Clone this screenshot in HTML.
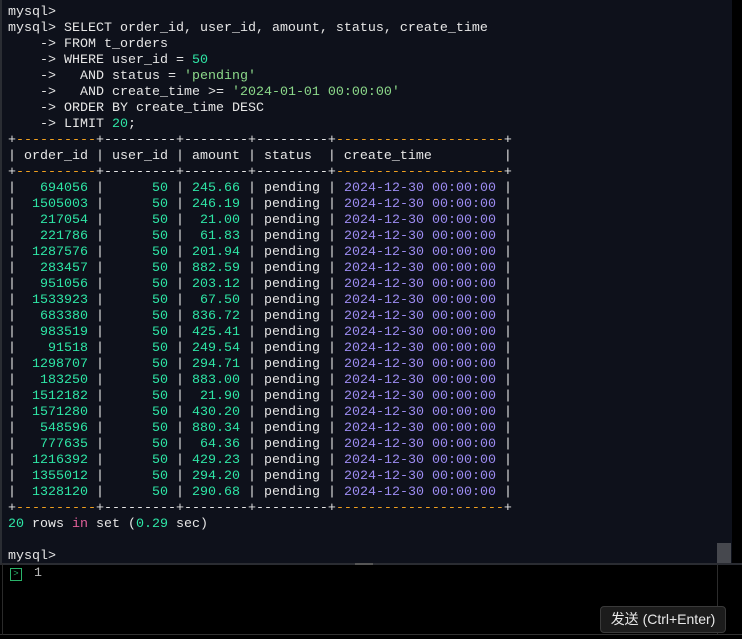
<!DOCTYPE html>
<html><head><meta charset="utf-8"><style>
body{margin:0;width:742px;height:639px;background:#000;overflow:hidden;position:relative;font-family:"Liberation Mono",monospace;}
#term{position:absolute;left:0;top:0;width:732px;height:563px;background:#0e111b;border-left:2px solid #2a2d33;box-sizing:border-box}
pre{margin:0;position:absolute;left:6px;top:5px;font-family:"Liberation Mono",monospace;font-size:13.33px;line-height:16px;color:#e6e6e6;}
.n{color:#2ee6a6}.s{color:#8cd98a}.p{color:#9d8cf2}.o{color:#f0a020}.k{color:#e2609a}
#thumb{position:absolute;left:717px;top:543px;width:14px;height:20px;background:#46484e}
#bot{position:absolute;left:0;top:563px;width:742px;height:76px;background:#000;border-top:2px solid #2a2c32;box-sizing:border-box}
#vl{position:absolute;left:717px;top:565px;width:1px;height:70px;background:#2c2c2c}
#bl{position:absolute;left:0;top:634px;width:742px;height:1px;background:#333}
#ll{position:absolute;left:2px;top:563px;width:1px;height:72px;background:#2a2a2a}
#prm{position:absolute;left:10px;top:568px;width:10px;height:11px;border:1px solid #2ab36a;color:#2ab36a;font-size:9px;line-height:11px;text-align:center}
#one{position:absolute;left:34px;top:566px;color:#bbb;font-size:13.33px}
#btn{position:absolute;left:600px;top:606px;width:124px;height:25px;background:#1c1c1c;border:1px solid #3a3a3a;border-radius:4px;color:#e8e8e8;font-family:"Liberation Sans","Noto Sans CJK SC",sans-serif;font-size:14px;line-height:25px;text-align:center}
#grip{position:absolute;left:355px;top:563px;width:18px;height:2px;background:#555}
</style></head><body>
<div id="term"><pre>mysql>
mysql> SELECT order_id, user_id, amount, status, create_time
    -> FROM t_orders
    -> WHERE user_id = <span class="n">50</span>
    ->   AND status = <span class="s">'pending'</span>
    ->   AND create_time >= <span class="s">'2024-01-01 00:00:00'</span>
    -> ORDER BY create_time DESC
    -> LIMIT <span class="n">20</span>;
+<span class="o">----------</span>+---------+--------+---------+<span class="o">---------------------</span>+
| order_id | user_id | amount | status  | create_time         |
+<span class="o">----------</span>+---------+--------+---------+<span class="o">---------------------</span>+
| <span class="n">  694056</span> | <span class="n">     50</span> | <span class="n">245.66</span> | pending | <span class="p">2024-12-30 00:00:00</span> |
| <span class="n"> 1505003</span> | <span class="n">     50</span> | <span class="n">246.19</span> | pending | <span class="p">2024-12-30 00:00:00</span> |
| <span class="n">  217054</span> | <span class="n">     50</span> | <span class="n"> 21.00</span> | pending | <span class="p">2024-12-30 00:00:00</span> |
| <span class="n">  221786</span> | <span class="n">     50</span> | <span class="n"> 61.83</span> | pending | <span class="p">2024-12-30 00:00:00</span> |
| <span class="n"> 1287576</span> | <span class="n">     50</span> | <span class="n">201.94</span> | pending | <span class="p">2024-12-30 00:00:00</span> |
| <span class="n">  283457</span> | <span class="n">     50</span> | <span class="n">882.59</span> | pending | <span class="p">2024-12-30 00:00:00</span> |
| <span class="n">  951056</span> | <span class="n">     50</span> | <span class="n">203.12</span> | pending | <span class="p">2024-12-30 00:00:00</span> |
| <span class="n"> 1533923</span> | <span class="n">     50</span> | <span class="n"> 67.50</span> | pending | <span class="p">2024-12-30 00:00:00</span> |
| <span class="n">  683380</span> | <span class="n">     50</span> | <span class="n">836.72</span> | pending | <span class="p">2024-12-30 00:00:00</span> |
| <span class="n">  983519</span> | <span class="n">     50</span> | <span class="n">425.41</span> | pending | <span class="p">2024-12-30 00:00:00</span> |
| <span class="n">   91518</span> | <span class="n">     50</span> | <span class="n">249.54</span> | pending | <span class="p">2024-12-30 00:00:00</span> |
| <span class="n"> 1298707</span> | <span class="n">     50</span> | <span class="n">294.71</span> | pending | <span class="p">2024-12-30 00:00:00</span> |
| <span class="n">  183250</span> | <span class="n">     50</span> | <span class="n">883.00</span> | pending | <span class="p">2024-12-30 00:00:00</span> |
| <span class="n"> 1512182</span> | <span class="n">     50</span> | <span class="n"> 21.90</span> | pending | <span class="p">2024-12-30 00:00:00</span> |
| <span class="n"> 1571280</span> | <span class="n">     50</span> | <span class="n">430.20</span> | pending | <span class="p">2024-12-30 00:00:00</span> |
| <span class="n">  548596</span> | <span class="n">     50</span> | <span class="n">880.34</span> | pending | <span class="p">2024-12-30 00:00:00</span> |
| <span class="n">  777635</span> | <span class="n">     50</span> | <span class="n"> 64.36</span> | pending | <span class="p">2024-12-30 00:00:00</span> |
| <span class="n"> 1216392</span> | <span class="n">     50</span> | <span class="n">429.23</span> | pending | <span class="p">2024-12-30 00:00:00</span> |
| <span class="n"> 1355012</span> | <span class="n">     50</span> | <span class="n">294.20</span> | pending | <span class="p">2024-12-30 00:00:00</span> |
| <span class="n"> 1328120</span> | <span class="n">     50</span> | <span class="n">290.68</span> | pending | <span class="p">2024-12-30 00:00:00</span> |
+<span class="o">----------</span>+---------+--------+---------+<span class="o">---------------------</span>+
<span class="n">20</span> rows <span class="k">in</span> set (<span class="n">0.29</span> sec)

mysql></pre></div>
<div id="thumb"></div>
<div id="bot"></div>
<div id="grip"></div>
<div id="vl"></div><div id="bl"></div><div id="ll"></div>
<div id="prm">&gt;</div>
<div id="one">1</div>
<div id="btn">发送 (Ctrl+Enter)</div>
</body></html>
